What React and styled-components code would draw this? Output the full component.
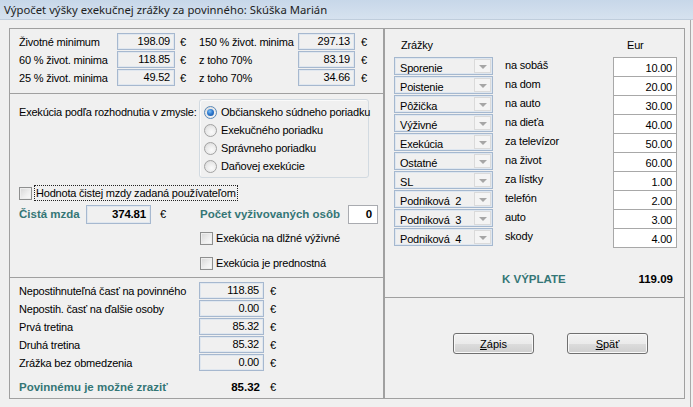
import React from 'react';
import styled, { createGlobalStyle } from 'styled-components';

const TEAL = '#347676';

const GlobalStyle = createGlobalStyle`
  html, body {
    margin: 0;
    padding: 0;
    background: #f0f0f0;
  }
  body {
    font-family: "Liberation Sans", Arial, sans-serif;
    font-size: 11px;
    letter-spacing: -0.2px;
    color: #000;
  }
  * {
    box-sizing: border-box;
  }
`;

const Window = styled.div`
  width: 693px;
  height: 407px;
  display: flex;
  flex-direction: column;
  background: #f0f0f0;
  overflow: hidden;
`;

const TitleBar = styled.div`
  flex: none;
  height: 20px;
  padding: 0 4px 1px;
  display: flex;
  align-items: center;
  background: linear-gradient(#c7d7e9, #d6e2ef);
  border-bottom: 1px solid #bfcddc;
  font-family: "Noto Sans", "Liberation Sans", sans-serif;
  font-size: 11.3px;
  letter-spacing: 0;
  color: #1e1e1e;
`;

const Body = styled.div`
  flex: 1;
  width: 691px;
  display: flex;
  align-items: flex-start;
  padding: 8px 0 0 9px;
  border-right: 1px solid #a9a9a9;
`;

const Panel = styled.div`
  width: ${(p) => p.$w}px;
  height: 371px;
  border: 1px solid #a0a0a0;
  display: flex;
  flex-direction: column;
`;

const Section = styled.div`
  flex: ${(p) => (p.$h ? 'none' : 1)};
  height: ${(p) => (p.$h ? `${p.$h}px` : 'auto')};
  border-bottom: ${(p) => (p.$last ? 'none' : '1px solid #a0a0a0')};
  padding: ${(p) => p.$pad || '0'};
`;

const MinGrid = styled.div`
  display: grid;
  grid-template-columns: 98px 58px 24px 99px 57px auto;
  grid-auto-rows: 17px;
  row-gap: 1px;
  align-items: center;
`;

const Text = styled.span`
  white-space: nowrap;
`;

const ValueBox = styled.div`
  width: ${(p) => (p.$w ? `${p.$w}px` : 'auto')};
  height: ${(p) => p.$h || 17}px;
  border: 1px solid #a6b8cf;
  box-shadow: inset 0 0 0 1px #e0e7ef;
  background: #f0f0f0;
  text-align: right;
  padding-right: 4px;
  line-height: ${(p) => (p.$h || 17) - 2}px;
  font-size: ${(p) => (p.$bold ? '11.5px' : 'inherit')};
  font-weight: ${(p) => (p.$bold ? 700 : 400)};
`;

const Euro = styled.span`
  padding-left: ${(p) => p.$pl || 6}px;
  width: ${(p) => (p.$w ? `${p.$w}px` : 'auto')};
  flex: none;
`;

const ExecRow = styled.div`
  display: flex;
  align-items: flex-start;
`;

const ExecLabel = styled.div`
  width: 180px;
  margin-top: 4px;
  line-height: 18px;
  white-space: nowrap;
`;

const RadioGroup = styled.div`
  width: 170px;
  height: 79px;
  border: 1px solid #d2dae1;
  border-radius: 3px;
  box-shadow: inset 1px 1px 0 #fafafa;
  padding: 3px 0 0 4px;
`;

const RadioRow = styled.label`
  height: 18px;
  display: flex;
  align-items: center;
  gap: 4px;
  white-space: nowrap;
`;

const Radio = styled.span`
  position: relative;
  width: 13px;
  height: 13px;
  flex: none;
  border-radius: 50%;
  border: 1px solid ${(p) => (p.$checked ? '#5b89b8' : '#a2a2a2')};
  background: radial-gradient(circle at 60% 65%, #fbfbfb 0%, #e9e9e9 55%, #cfcfcf 100%);

  &::after {
    content: '';
    display: ${(p) => (p.$checked ? 'block' : 'none')};
    position: absolute;
    left: 2px;
    top: 2px;
    width: 7px;
    height: 7px;
    border-radius: 50%;
    background: radial-gradient(circle at 40% 35%, #7fc0f4 0%, #2f7ad0 45%, #134f9a 100%);
  }
`;

const CheckRow = styled.div`
  height: 18px;
  display: flex;
  align-items: center;
  gap: ${(p) => p.$gap || 3}px;
  margin-top: ${(p) => p.$mt || 0}px;
  margin-left: ${(p) => p.$ml || 0}px;
  white-space: nowrap;
`;

const CheckBox = styled.span`
  width: 13px;
  height: 13px;
  flex: none;
  border: 1px solid #8e8f8f;
  background: linear-gradient(135deg, #d6d6d6 0%, #f0f0f0 60%, #fbfbfb 100%);
  box-shadow: inset 0 0 0 1px #eeeeee;
`;

const FocusText = styled.span`
  height: 16px;
  line-height: 14px;
  padding: 0 1px;
  border: 1px dotted #222;
  white-space: nowrap;
`;

const MzdaRow = styled.div`
  display: flex;
  align-items: center;
  height: 20px;
  margin-top: 2px;
`;

const TealLabel = styled.span`
  color: ${TEAL};
  font-size: 11.5px;
  letter-spacing: 0;
  font-weight: 700;
  white-space: nowrap;
  width: ${(p) => (p.$w ? `${p.$w}px` : 'auto')};
  flex: none;
`;

const CountBox = styled.div`
  width: 30px;
  height: 19px;
  border: 1px solid #a9abb0;
  background: #fff;
  text-align: right;
  padding-right: 5px;
  line-height: 17px;
  font-size: 11.5px;
  font-weight: 700;
`;

const RestGrid = styled.div`
  display: grid;
  grid-template-columns: 180px 65px auto;
  grid-auto-rows: 17px;
  row-gap: 1px;
  align-items: center;
`;

const TotalRow = styled.div`
  display: grid;
  grid-template-columns: 180px 65px auto;
  height: 18px;
  margin-top: 7px;
  align-items: center;
`;

const BoldValue = styled.span`
  font-size: 11.5px;
  letter-spacing: 0;
  font-weight: 700;
  text-align: right;
  padding-right: 4px;
`;

const DeductionGrid = styled.div`
  display: grid;
  grid-template-columns: 99px 12px 108px 64px;
  grid-template-rows: 20px;
  grid-auto-rows: 19px;
`;

const HeaderText = styled.span`
  align-self: start;
  line-height: 17px;
  padding-left: ${(p) => p.$pl || 0}px;
  grid-column: ${(p) => p.$col};
`;

const Combo = styled.div`
  grid-column: 1;
  height: 18px;
  display: flex;
  align-items: center;
  border: 1px solid #a5b8cf;
  box-shadow: inset 0 0 0 1px #dfe7f0;
  background: #f0f0f0;
  padding-left: 5px;
`;

const ComboText = styled.span`
  flex: 1;
  padding-top: 3px;
  white-space: pre;
`;

const ComboButton = styled.span`
  width: 17px;
  height: 14px;
  margin-right: 1px;
  border: 1px solid #dadada;
  background: #f4f4f4;
  display: flex;
  align-items: center;
  justify-content: center;

  &::after {
    content: '';
    border-left: 4px solid transparent;
    border-right: 4px solid transparent;
    border-top: 4px solid #a6a6a6;
    margin-top: 1px;
  }
`;

const Desc = styled.span`
  grid-column: 3;
  align-self: start;
  line-height: 17px;
  white-space: nowrap;
`;

const Amount = styled.div`
  grid-column: 4;
  height: 20px;
  border: 1px solid #a8a8a8;
  background: #fff;
  text-align: right;
  padding-right: 4px;
  line-height: 20px;
`;

const PayRow = styled.div`
  width: 283px;
  height: 18px;
  margin-top: 23px;
  padding-left: 108px;
  display: flex;
  align-items: center;
  justify-content: space-between;
`;

const ButtonRow = styled.div`
  display: flex;
  gap: 33px;
`;

const Button = styled.button`
  width: 81px;
  height: 21px;
  border: 1px solid #707070;
  border-radius: 3px;
  background: linear-gradient(#f2f2f2 0%, #ebebeb 50%, #dddddd 51%, #cfcfcf 100%);
  font-family: inherit;
  font-size: 11px;
  color: #000;
  padding: 0;
  box-shadow: inset 0 0 0 1px #f8f8f8;

  & u {
    text-decoration: underline;
  }
`;

const minima = [
  ['Životné minimum', '198.09', '150 % život. minima', '297.13'],
  ['60 % život. minima', '118.85', 'z toho 70%', '83.19'],
  ['25 % život. minima', '49.52', 'z toho 70%', '34.66'],
];

const modes = [
  'Občianskeho súdneho poriadku',
  'Exekučného poriadku',
  'Správneho poriadku',
  'Daňovej exekúcie',
];

const rest = [
  ['Nepostihnuteľná časť na povinného', '118.85'],
  ['Nepostih. časť na ďalšie osoby', '0.00'],
  ['Prvá tretina', '85.32'],
  ['Druhá tretina', '85.32'],
  ['Zrážka bez obmedzenia', '0.00'],
];

const deductions = [
  ['Sporenie', 'na sobáš', '10.00'],
  ['Poistenie', 'na dom', '20.00'],
  ['Pôžička', 'na auto', '30.00'],
  ['Výživné', 'na dieťa', '40.00'],
  ['Exekúcia', 'za televízor', '50.00'],
  ['Ostatné', 'na život', '60.00'],
  ['SL', 'za lístky', '1.00'],
  ['Podniková  2', 'telefón', '2.00'],
  ['Podniková  3', 'auto', '3.00'],
  ['Podniková  4', 'skody', '4.00'],
];

export default function App() {
  return (
    <>
      <GlobalStyle />
      <Window>
        <TitleBar>Výpočet výšky exekučnej zrážky za povinného: Skúška Marián</TitleBar>
        <Body>
          <Panel $w={375}>
            <Section $h={65} $pad="4px 0 0 9px">
              <MinGrid>
                {minima.map(([l1, v1, l2, v2]) => (
                  <React.Fragment key={l1}>
                    <Text>{l1}</Text>
                    <ValueBox>{v1}</ValueBox>
                    <Euro $pl={5}>€</Euro>
                    <Text>{l2}</Text>
                    <ValueBox>{v2}</ValueBox>
                    <Euro $pl={6}>€</Euro>
                  </React.Fragment>
                ))}
              </MinGrid>
            </Section>

            <Section $h={184} $pad="5px 0 0 9px">
              <ExecRow>
                <ExecLabel>Exekúcia podľa rozhodnutia v zmysle:</ExecLabel>
                <RadioGroup>
                  {modes.map((m, i) => (
                    <RadioRow key={m}>
                      <Radio $checked={i === 0} />
                      <span>{m}</span>
                    </RadioRow>
                  ))}
                </RadioGroup>
              </ExecRow>

              <CheckRow $mt={6} $gap={2}>
                <CheckBox />
                <FocusText>Hodnota čistej mzdy zadaná používateľom</FocusText>
              </CheckRow>

              <MzdaRow>
                <TealLabel $w={67}>Čistá mzda</TealLabel>
                <ValueBox $w={65} $h={19} $bold>374.81</ValueBox>
                <Euro $pl={9} $w={49}>€</Euro>
                <TealLabel $w={148}>Počet vyživovaných osôb</TealLabel>
                <CountBox>0</CountBox>
              </MzdaRow>

              <CheckRow $mt={5} $ml={181}>
                <CheckBox />
                <span>Exekúcia na dlžné výživné</span>
              </CheckRow>
              <CheckRow $mt={7} $ml={181}>
                <CheckBox />
                <span>Exekúcia je prednostná</span>
              </CheckRow>
            </Section>

            <Section $last $pad="4px 0 0 9px">
              <RestGrid>
                {rest.map(([l, v]) => (
                  <React.Fragment key={l}>
                    <Text>{l}</Text>
                    <ValueBox>{v}</ValueBox>
                    <Euro $pl={6}>€</Euro>
                  </React.Fragment>
                ))}
              </RestGrid>
              <TotalRow>
                <TealLabel>Povinnému je možné zraziť</TealLabel>
                <BoldValue>85.32</BoldValue>
                <Euro $pl={6}>€</Euro>
              </TotalRow>
            </Section>
          </Panel>

          <Panel $w={301}>
            <Section $h={269} $pad="8px 0 0 9px">
              <DeductionGrid>
                <HeaderText $col={1} $pl={7}>Zrážky</HeaderText>
                <HeaderText $col={4} $pl={14}>Eur</HeaderText>
                {deductions.map(([type, desc, amount]) => (
                  <React.Fragment key={type}>
                    <Combo>
                      <ComboText>{type}</ComboText>
                      <ComboButton />
                    </Combo>
                    <Desc>{desc}</Desc>
                    <Amount>{amount}</Amount>
                  </React.Fragment>
                ))}
              </DeductionGrid>
              <PayRow>
                <TealLabel>K VÝPLATE</TealLabel>
                <BoldValue>119.09</BoldValue>
              </PayRow>
            </Section>
            <Section $last $pad="35px 0 0 68px">
              <ButtonRow>
                <Button><u>Z</u>ápis</Button>
                <Button><u>S</u>päť</Button>
              </ButtonRow>
            </Section>
          </Panel>
        </Body>
      </Window>
    </>
  );
}
